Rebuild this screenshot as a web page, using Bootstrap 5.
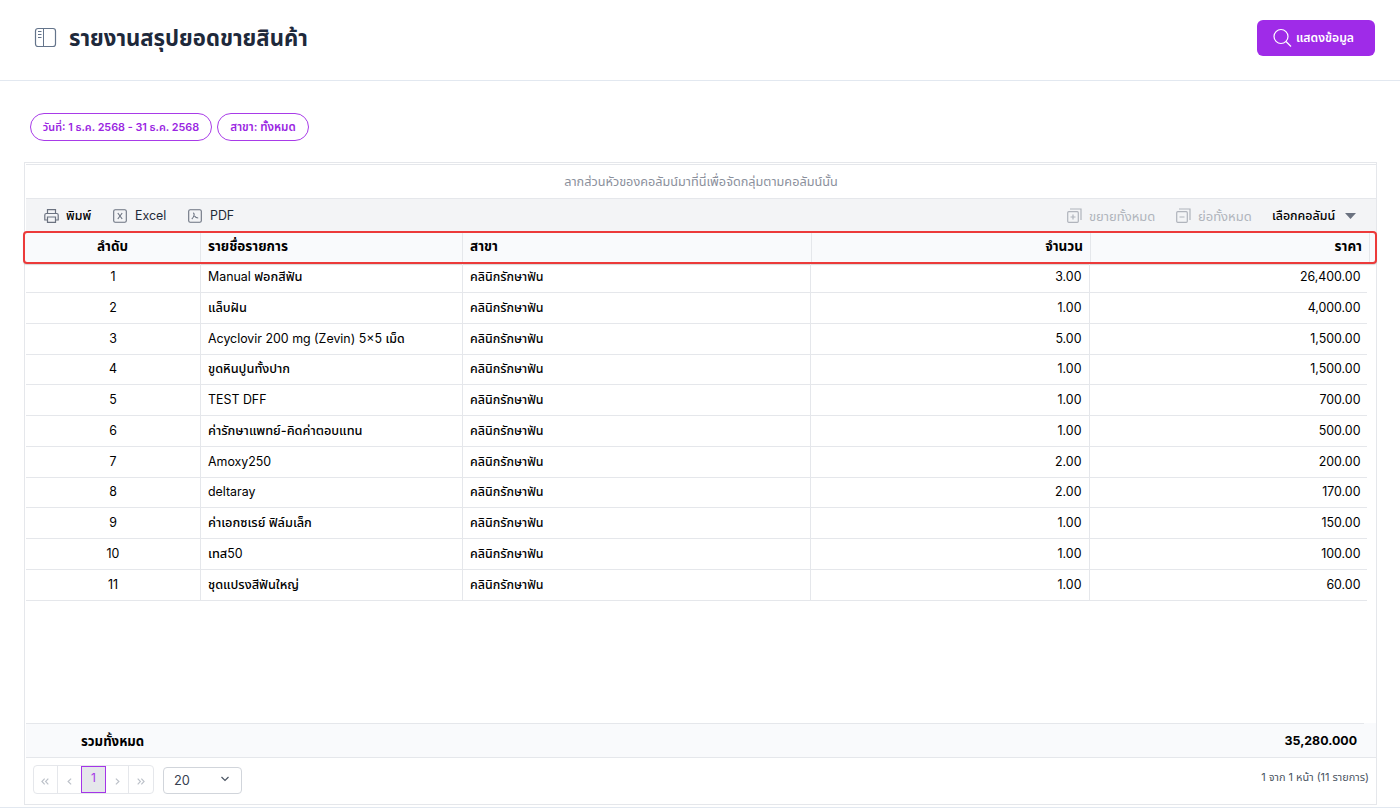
<!DOCTYPE html>
<html lang="th">
<head>
<meta charset="utf-8">
<meta name="viewport" content="width=device-width, initial-scale=1">
<title>รายงานสรุปยอดขายสินค้า</title>
<link href="https://cdn.jsdelivr.net/npm/bootstrap@5.3.0/dist/css/bootstrap.min.css" rel="stylesheet">
<style>
body{font-family:Inter,"Noto Sans Thai","Noto Sans",sans-serif;font-size:12.4px;line-height:20px;color:#000;height:810px;overflow:hidden;background:#fff}
svg{display:block;flex:none}
.topbar{height:81px;border-bottom:1px solid #e2e8f0;padding:0 25px 5px 34px}
.topbar h1{font-size:22.1px;font-weight:700;color:#1e293b;line-height:30px}
.btn-show{width:118px;height:36px;background:#9f2be8;color:#fff;border-radius:6px;font-size:12.2px;font-weight:600;padding:1px 5px 0 0}
.btn-show:hover{background:#8a1fd0;color:#fff}
.filters{padding:32px 0 0 30px;gap:5px}
.chip{height:28px;border:1px solid #a83be8;border-radius:14px;color:#9a25e2;font-size:10.8px;font-weight:600}
.chip-date{width:182px;padding-top:1px}.chip-branch{width:92px;font-size:11.6px}
.report{margin:21px 23px 0 24px;height:643px;border:1px solid #e5e7eb;padding:1px 0 0 1px}
.group-drop{height:35px;border-top:1px solid #e5e7eb;border-bottom:1px solid #e5e7eb;color:#8b909c;font-size:12.7px}
.tools{height:32px;background:#f3f4f6;padding:1px 20px 0 18px}
.tools .off{color:#b0b4bc}
.tool{display:flex;align-items:center;gap:7px}
.tool-print{width:69px}.tool-file{width:75px;gap:8px}.tool-file span{color:#1f2937}
.tool-expand{width:109px;font-size:13px}.tool-collapse{width:96px;font-size:13px}
.tool-columns{width:84px;font-weight:500}
.cols{display:grid;grid-template-columns:175px 262px 348px 279px 278px}
.cols>div{border-right:1px solid #e5e7eb;padding:0 7px;display:flex;align-items:center;white-space:nowrap}
.cols>div:first-child{justify-content:center}
.cols>div:nth-child(4),.cols>div:nth-child(5){justify-content:flex-end}
.rows .cols>div:nth-child(4),.rows .cols>div:nth-child(5){padding-right:7.5px}
.rows .cols>div:nth-child(3){font-size:12.45px;font-weight:500}
.rows .th{font-size:12.75px;font-weight:500}
.head{height:33px;margin:0 0 0 -3px;width:1354px;border:2px solid #ec3a3a;border-radius:4px;background:#f9fafc;font-size:13.5px;font-weight:700;grid-template-columns:176px 262px 349px 279px 279px;box-shadow:0 1px 1px #8885}
.head>div{padding-bottom:3px}
.rows .cols{height:30.77px;width:1341px;border-bottom:1px solid #e5e7eb}
.rows .cols:first-child{height:29px}
.rows .cols:first-child>div{padding-bottom:2px}
.rows .cols>div:last-child{border-right:0}
.rows{height:459px}
.total{height:35px;background:linear-gradient(#e5e7eb,#e5e7eb) 0 0/1338px 1px no-repeat #f9fafc;border-bottom:1px solid #e5e7eb;font-weight:700;padding:1px 19px 0 55px}
.total span:first-child{font-size:13.2px}
.pager-row{padding:7px 7px 0 7px}
.pager{width:121px;height:29px;border:1px solid #e5e7eb;border-radius:4px}
.pager>div{width:24px;display:flex;justify-content:center;padding-top:12px;border-right:1px solid #e5e7eb}
.pager>div:nth-child(2),.pager>div:last-child{border-right:0}
.pager .now{width:25px;height:27px;border:1px solid #a435e8;background:#e5e7eb;color:#a435e8;font-size:12px;padding-top:1px}
.size{width:79px;height:27px;border:1px solid #d1d5db;border-radius:4px;padding:0 11px 0 10px;color:#374151;font-size:12.8px;margin:2px 0 0 9px}
.size svg{margin-top:-3px}
.info{color:#4b5563;font-size:10.9px;padding-top:2px}
.pageline{height:1px;background:#e2e8f0;margin-top:2px}
</style>
</head>
<body>
<header class="topbar d-flex align-items-center">
<svg width="23" height="21" viewBox="0 0 23 21" fill="none" stroke="#64748b"><rect x="1.500" y="1.500" width="20" height="18" rx="2.500" stroke-width="1.200"/><path d="M9.500 1.500v18M4 4.500h3.500M4 7.500h3.500M4 10.500h3.500"/></svg>
<h1 class="m-0 ms-2 ps-1">รายงานสรุปยอดขายสินค้า</h1>
<button class="btn btn-show ms-auto d-flex align-items-center justify-content-center gap-1"><svg width="19" height="20" viewBox="0 0 19 20" fill="none" stroke="#fff" stroke-width="1.200"><circle cx="8" cy="8.500" r="7"/><path d="M13 13.500l5 5"/></svg><span>แสดงข้อมูล</span></button>
</header>
<div class="filters d-flex">
<div class="chip chip-date d-flex align-items-center justify-content-center"><span>วันที่: 1 ธ.ค. 2568 - 31 ธ.ค. 2568</span></div>
<div class="chip chip-branch d-flex align-items-center justify-content-center"><span>สาขา: ทั้งหมด</span></div>
</div>
<main class="report">
<div class="group-drop d-flex align-items-center justify-content-center"><span>ลากส่วนหัวของคอลัมน์มาที่นี่เพื่อจัดกลุ่มตามคอลัมน์นั้น</span></div>
<div class="tools d-flex align-items-center">
<div class="tool tool-print"><svg width="15" height="14" viewBox="0 0 15 14" fill="none" stroke="#6b7280" stroke-width="1.200"><path d="M3.500 4.500V.7h8v3.800M3.500 11H.8V6q0-1.500 1.500-1.500h10.400q1.500 0 1.500 1.500v5h-2.700M3.500 8h8v5.300h-8z"/></svg><span class="fw-medium">พิมพ์</span></div>
<div class="tool tool-file"><svg width="14" height="14" viewBox="0 0 14 14" fill="none" stroke="#6b7280" stroke-width="1.100"><rect x=".7" y=".7" width="12.600" height="12.600" rx="1.500"/><path d="M4.800 4l4.400 6M9.200 4L4.800 10"/></svg><span>Excel</span></div>
<div class="tool tool-file"><svg width="14" height="14" viewBox="0 0 14 14" fill="none" stroke="#6b7280" stroke-width="1.100"><rect x=".7" y=".7" width="12.600" height="12.600" rx="1.500"/><path d="M5 4c2 0 1.200 4-1.200 6M6.500 7c1 1.500 2 2 3.700 2"/></svg><span>PDF</span></div>
<div class="tool tool-expand off ms-auto"><svg width="15" height="15" viewBox="0 0 15 15" fill="none" stroke="#b0b4bc" stroke-width="1.200"><rect x=".7" y="3.700" width="10.600" height="10.600" rx="1"/><path d="M3 1h11v11M6 6.500v5M3.500 9h5"/></svg><span>ขยายทั้งหมด</span></div>
<div class="tool tool-collapse off"><svg width="15" height="15" viewBox="0 0 15 15" fill="none" stroke="#b0b4bc" stroke-width="1.200"><rect x=".7" y="3.700" width="10.600" height="10.600" rx="1"/><path d="M3 1h11v11M3.500 9h5"/></svg><span>ย่อทั้งหมด</span></div>
<div class="tool tool-columns justify-content-between"><span>เลือกคอลัมน์</span><svg width="11" height="6" viewBox="0 0 11 6"><path d="M0 0h11L5.500 6z" fill="#6b7280"/></svg></div>
</div>
<div class="cols head"><div>ลำดับ</div><div>รายชื่อรายการ</div><div>สาขา</div><div>จำนวน</div><div>ราคา</div></div>
<div class="rows">
<div class="cols"><div>1</div><div>Manual&nbsp;<span class="th">ฟอกสีฟัน</span></div><div>คลินิกรักษาฟัน</div><div>3.00</div><div>26,400.00</div></div>
<div class="cols"><div>2</div><div class="th">แล็บฝัน</div><div>คลินิกรักษาฟัน</div><div>1.00</div><div>4,000.00</div></div>
<div class="cols"><div>3</div><div>Acyclovir 200 mg (Zevin) 5×5&nbsp;<span class="fw-medium">เม็ด</span></div><div>คลินิกรักษาฟัน</div><div>5.00</div><div>1,500.00</div></div>
<div class="cols"><div>4</div><div class="th">ขูดหินปูนทั้งปาก</div><div>คลินิกรักษาฟัน</div><div>1.00</div><div>1,500.00</div></div>
<div class="cols"><div>5</div><div>TEST DFF</div><div>คลินิกรักษาฟัน</div><div>1.00</div><div>700.00</div></div>
<div class="cols"><div>6</div><div class="th">ค่ารักษาแพทย์-คิดค่าตอบแทน</div><div>คลินิกรักษาฟัน</div><div>1.00</div><div>500.00</div></div>
<div class="cols"><div>7</div><div>Amoxy250</div><div>คลินิกรักษาฟัน</div><div>2.00</div><div>200.00</div></div>
<div class="cols"><div>8</div><div>deltaray</div><div>คลินิกรักษาฟัน</div><div>2.00</div><div>170.00</div></div>
<div class="cols"><div>9</div><div class="th">ค่าเอกซเรย์ ฟิล์มเล็ก</div><div>คลินิกรักษาฟัน</div><div>1.00</div><div>150.00</div></div>
<div class="cols"><div>10</div><div><span class="th">เทส</span>50</div><div>คลินิกรักษาฟัน</div><div>1.00</div><div>100.00</div></div>
<div class="cols"><div>11</div><div class="th">ชุดแปรงสีฟันใหญ่</div><div>คลินิกรักษาฟัน</div><div>1.00</div><div>60.00</div></div>
</div>
<div class="total d-flex align-items-center justify-content-between"><span>รวมทั้งหมด</span><span>35,280.000</span></div>
<div class="pager-row d-flex align-items-start">
<div class="pager d-flex"><div><svg width="8" height="7" viewBox="0 0 7 6" fill="none" stroke="#bcc1c9"><path d="M3.200.5L.8 3l2.400 2.500M6.400.5L4 3l2.400 2.500"/></svg></div><div><svg width="5" height="7" viewBox="0 0 4 6" fill="none" stroke="#bcc1c9"><path d="M3.400.5L.8 3l2.600 2.500"/></svg></div><div class="now">1</div><div><svg width="5" height="7" viewBox="0 0 4 6" fill="none" stroke="#bcc1c9"><path d="M.6.5L3.200 3 .6 5.500"/></svg></div><div><svg width="8" height="7" viewBox="0 0 7 6" fill="none" stroke="#bcc1c9"><path d="M.6.5L3 3 .6 5.500M3.800.5L6.200 3 3.800 5.500"/></svg></div></div>
<div class="size d-flex align-items-center justify-content-between"><span>20</span><svg width="10" height="6" viewBox="0 0 10 6" fill="none" stroke="#4b5563" stroke-width="1.200"><path d="M1.500 1L5 4.500 8.500 1"/></svg></div>
<div class="info ms-auto">1 จาก 1 หน้า (11 รายการ)</div>
</div>
</main>
<div class="pageline"></div>
<script src="https://cdn.jsdelivr.net/npm/bootstrap@5.3.0/dist/js/bootstrap.bundle.min.js"></script>
</body>
</html>
